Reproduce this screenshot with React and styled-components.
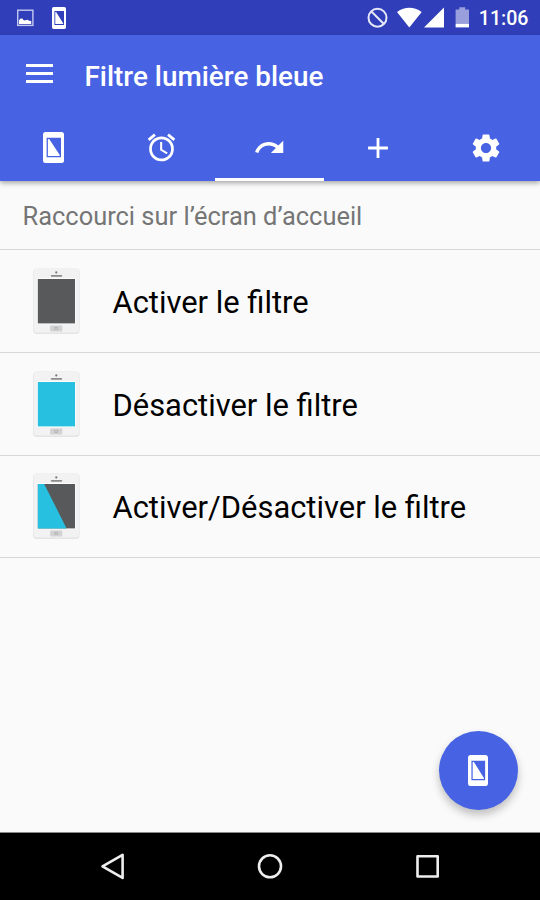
import React from 'react';
import styled, { createGlobalStyle } from 'styled-components';
import { MdAdd, MdAlarm, MdRedo, MdSettings } from 'react-icons/md';

const GlobalStyle = createGlobalStyle`
    body{
        margin: 0;
        background: #fafafa;
        font-family: Roboto, "Liberation Sans", sans-serif;
    }
`;

const Screen = styled.div`
    position: relative;
    display: flex;
    flex-direction: column;
    width: 540px;
    height: 900px;
    overflow: hidden;
    background: #fafafa;

    & svg{
        display: block;
        flex-shrink: 0;
    }
`;

const StatusBar = styled.div`
    display: flex;
    justify-content: space-between;
    height: 35px;
    box-sizing: border-box;
    padding: 0 11.5px 0 16px;
    background: #303fb9;
    color: white;
`;

const StatusGroup = styled.div`
    display: flex;
    align-items: center;
    gap: ${props => props.$gap}px;
`;

const Clock = styled.span`
    margin-left: 5px;
    font-size: 19.6px;
    font-weight: 500;
    line-height: 35px;
    padding-top: 2px;
`;

const Header = styled.header`
    position: relative;
    background: #4763e4;
    color: white;
    box-shadow: 0 2px 5px rgba(0, 0, 0, 0.35);
`;

const Toolbar = styled.div`
    display: flex;
    align-items: center;
    height: 80px;
    padding-left: 26px;
`;

const MenuButton = styled.button`
    display: flex;
    flex-direction: column;
    gap: 5px;
    width: 27px;
    padding: 0;
    margin-top: -3px;
    border: none;
    background: none;

    & span{
        height: 3px;
        background: white;
    }
`;

const Title = styled.h1`
    margin: 2px 0 0 31.5px;
    font-size: 27.9px;
    font-weight: 500;
    white-space: nowrap;
`;

const Tabs = styled.nav`
    display: flex;
    height: 66px;
    margin-left: -1px;
`;

const Tab = styled.button`
    width: 108.25px;
    display: flex;
    align-items: center;
    justify-content: center;
    padding: 2px 0 0;
    border: none;
    border-bottom: 3px solid ${props => props.$active ? 'white' : 'transparent'};
    background: none;
    color: white;
`;

const Main = styled.main`
    flex: 1;
`;

const SectionTitle = styled.h2`
    height: 69px;
    margin: 0;
    padding: 2px 0 0 22.5px;
    box-sizing: border-box;
    border-bottom: 1px solid #d6d6d6;
    color: #757575;
    font-size: 25.45px;
    font-weight: 400;
    line-height: 66px;
    white-space: nowrap;
`;

const List = styled.ul`
    margin: 0;
    padding: 0;
    list-style-type: none;
`;

const Item = styled.li`
    display: flex;
    align-items: center;
    height: 102.8px;
    box-sizing: border-box;
    padding-left: 32px;
    border-bottom: 1px solid #d6d6d6;

    & p{
        margin: 3px 0 0 32.5px;
        color: black;
        font-size: 30.9px;
        white-space: nowrap;
    }
`;

const Fab = styled.button`
    position: absolute;
    right: 22.5px;
    bottom: 90px;
    display: flex;
    align-items: center;
    justify-content: center;
    width: 79px;
    height: 79px;
    padding: 0 1px 0 0;
    border: none;
    border-radius: 50%;
    background: #4763e4;
    color: white;
    box-shadow: 0 5px 9px rgba(0, 0, 0, 0.24);
`;

const NavBar = styled.footer`
    display: flex;
    align-items: center;
    justify-content: center;
    gap: 121.5px;
    height: 68px;
    box-sizing: border-box;
    border-top: 1px solid #8a8a8a;
    background: black;
`;

// solid phone with a half filled screen
function FilterIcon({ width, height }) {
    return (
        <svg width={width} height={height} viewBox="0 0 21 31" preserveAspectRatio="none">
            <path
                fill="currentColor"
                fillRule="evenodd"
                d="M2.5 0H18.5A2.5 2.5 0 0 1 21 2.5V28.5A2.5 2.5 0 0 1 18.5 31H2.5A2.5 2.5 0 0 1 0 28.5V2.5A2.5 2.5 0 0 1 2.5 0ZM3.6 5.8V25.2H18V5.8ZM4.9 7H6.2L16.7 23V24H4.9Z"
            />
        </svg>
    );
}

function PictureIcon() {
    return (
        <svg width="18" height="18" viewBox="0 0 18 18">
            <rect x="1.7" y="1.2" width="15.2" height="15.2" fill="none" stroke="#c3c8ee" strokeWidth="1.4" />
            <path fill="white" d="M3 14.9V11.2L4.6 9.4 6.2 9.4 8 11.4 11.5 10.8 13.2 11.8 15.2 12V14.9Z" />
        </svg>
    );
}

function StatusIcons() {
    return (
        <svg width="103" height="35" viewBox="367 0 103 35">
            <g fill="none" stroke="#e6e8f8" strokeWidth="2">
                <circle cx="377.5" cy="17.7" r="9" />
                <path d="M371.2 11.3L383.9 24" />
            </g>
            <path fill="white" d="M397 12Q409.3 3.6 421.7 12L409.3 27.5Z" />
            <path fill="white" d="M444 7.6V27.6H424Z" />
            <path fill="#989fdc" d="M455.6 9.4H459.3V7.2H465.2V9.4H469V23.6H455.6Z" />
            <path fill="white" d="M455.6 23.6H469V27.4H455.6Z" />
        </svg>
    );
}

function Phone({ screen, split }) {
    return (
        <svg width="48" height="68" viewBox="0 0 48 68">
            <rect x="1" y="1.6" width="46.6" height="65.4" rx="4" fill="#e4e4e4" />
            <rect x="1.6" y="1.4" width="45.4" height="64.2" rx="3.5" fill="#f2f2f2" />
            <circle cx="24.3" cy="5.4" r="1.1" fill="#777" />
            <rect x="18.8" y="8" width="11.4" height="1.7" rx="0.8" fill="#8c8c8c" />
            <rect x="5" y="11.2" width="38.6" height="46" fill="white" />
            <rect x="5.8" y="12" width="37.2" height="44.4" fill={screen} />
            {split && <path fill="#27c0e0" d="M5.8 12H12.2L34.6 56.4H5.8Z" />}
            <rect x="18.1" y="58.4" width="12.2" height="6" rx="1" fill="#d2d2d2" />
            <rect x="22.9" y="60.2" width="2.6" height="2.4" fill="none" stroke="#aaa" strokeWidth="0.7" />
        </svg>
    );
}

const tabs = [
    { name: 'filter', icon: <FilterIcon width={21} height={31} /> },
    { name: 'alarm', icon: <MdAlarm size={33} /> },
    { name: 'shortcut', icon: <MdRedo size={33} />, active: true },
    { name: 'add', icon: <MdAdd size={34} /> },
    { name: 'settings', icon: <MdSettings size={34} /> },
];

const shortcuts = [
    { label: 'Activer le filtre', screen: '#58595b' },
    { label: 'Désactiver le filtre', screen: '#27c0e0' },
    { label: 'Activer/Désactiver le filtre', screen: '#58595b', split: true },
];

export default function App() {
    return (
        <Screen>
            <GlobalStyle />
            <StatusBar>
                <StatusGroup $gap={18}>
                    <PictureIcon />
                    <FilterIcon width={14} height={22} />
                </StatusGroup>
                <StatusGroup $gap={4}>
                    <StatusIcons />
                    <Clock>11:06</Clock>
                </StatusGroup>
            </StatusBar>
            <Header>
                <Toolbar>
                    <MenuButton>
                        <span />
                        <span />
                        <span />
                    </MenuButton>
                    <Title>Filtre lumière bleue</Title>
                </Toolbar>
                <Tabs>
                    {
                        tabs.map((tab) =>
                            <Tab key={tab.name} $active={tab.active}>{tab.icon}</Tab>
                        )
                    }
                </Tabs>
            </Header>
            <Main>
                <SectionTitle>Raccourci sur l’écran d’accueil</SectionTitle>
                <List>
                    {
                        shortcuts.map((item) =>
                            <Item key={item.label}>
                                <Phone screen={item.screen} split={item.split} />
                                <p>{item.label}</p>
                            </Item>
                        )
                    }
                </List>
            </Main>
            <Fab>
                <FilterIcon width={20} height={31} />
            </Fab>
            <NavBar>
                <svg width="36" height="36" viewBox="0 0 36 36" fill="none" stroke="#eee" strokeWidth="2.6" strokeLinejoin="round">
                    <path d="M27.6 5.8V28.9L7.5 17.3Z" />
                </svg>
                <svg width="36" height="36" viewBox="0 0 36 36" fill="none" stroke="#eee" strokeWidth="2.6">
                    <circle cx="18" cy="17.3" r="11" />
                </svg>
                <svg width="36" height="36" viewBox="0 0 36 36" fill="none" stroke="#eee" strokeWidth="2.6" strokeLinejoin="round">
                    <rect x="7.5" y="7.3" width="20.2" height="20.2" />
                </svg>
            </NavBar>
        </Screen>
    );
}
